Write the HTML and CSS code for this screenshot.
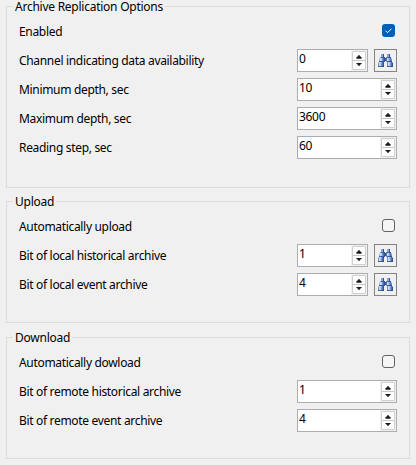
FILE: index.html
```
<!DOCTYPE html>
<html lang="en">
<head>
<meta charset="utf-8">
<title>Archive Replication Options</title>
<link rel="stylesheet" href="styles.css">
</head>
<body>
<svg class="defs" width="0" height="0">
  <defs>
    <linearGradient id="tube" x1="0" x2="1" y1="0" y2="0">
      <stop offset="0" stop-color="#4a70b4"/>
      <stop offset=".3" stop-color="#e4edf9"/>
      <stop offset=".65" stop-color="#5f86c6"/>
      <stop offset="1" stop-color="#1f4492"/>
    </linearGradient>
    <symbol id="find" viewBox="0 0 15 15">
      <path d="M3 1h3v3H3zM9 1h3v3H9z" fill="#88a6d6"/>
      <path d="M5 1h1v3H5zM11 1h1v3h-1z" fill="#2b5097"/>
      <path d="M2 4h5v5H1z" fill="url(#tube)"/>
      <path d="M8 4h5l1 5H8z" fill="url(#tube)"/>
      <path d="M6.5 5h2v3h-2z" fill="#34558f"/>
      <path d="M1 9h5v5H0v-4z" fill="url(#tube)"/>
      <path d="M9 9h5l1 1v4H9z" fill="url(#tube)"/>
      <path d="M1 8.5h5M9 8.5h5M2.500 4.500h4M8.500 4.500h4M0 13.500h6M9 13.500h6" stroke="#244890" stroke-width=".8"/>
    </symbol>
    <symbol id="arrows" viewBox="0 0 14 18">
      <path d="M6 3h2v1h1v1h1v2H4V5h1V4h1z" fill="#1a1a1a"/>
      <path d="M4 12h6v1H9v1H8v1H6v-1H5v-1H4z" fill="#1a1a1a"/>
    </symbol>
  </defs>
</svg>
<main class="panel">
  <section class="group main-group">
    <h2><span>Archive Replication Options</span></h2>
    <div class="row"><label>Enabled</label><span class="check checked"><svg viewBox="0 0 13 13"><path d="M3.500 6.700l2 2 4-4"/></svg></span></div>
    <div class="row"><label>Channel indicating data availability</label><div class="spin short"><b>0</b><i><svg><use href="#arrows"/></svg></i></div><button><svg><use href="#find"/></svg></button></div>
    <div class="row"><label>Minimum depth, sec</label><div class="spin"><b>10</b><i><svg><use href="#arrows"/></svg></i></div></div>
    <div class="row"><label>Maximum depth, sec</label><div class="spin"><b>3600</b><i><svg><use href="#arrows"/></svg></i></div></div>
    <div class="row"><label>Reading step, sec</label><div class="spin"><b>60</b><i><svg><use href="#arrows"/></svg></i></div></div>
  </section>
  <section class="group">
    <h2><span>Upload</span></h2>
    <div class="row"><label>Automatically upload</label><span class="check"></span></div>
    <div class="row"><label>Bit of local historical archive</label><div class="spin short"><b>1</b><i><svg><use href="#arrows"/></svg></i></div><button><svg><use href="#find"/></svg></button></div>
    <div class="row"><label>Bit of local event archive</label><div class="spin short"><b>4</b><i><svg><use href="#arrows"/></svg></i></div><button><svg><use href="#find"/></svg></button></div>
  </section>
  <section class="group">
    <h2><span>Download</span></h2>
    <div class="row"><label>Automatically dowload</label><span class="check"></span></div>
    <div class="row"><label>Bit of remote historical archive</label><div class="spin"><b>1</b><i><svg><use href="#arrows"/></svg></i></div></div>
    <div class="row"><label>Bit of remote event archive</label><div class="spin"><b>4</b><i><svg><use href="#arrows"/></svg></i></div></div>
  </section>
</main>
</body>
</html>
```
FILE: styles.css
```
* { box-sizing: border-box; }
body {
  margin: 0;
  height: 465px;
  background: #f0f0f0;
  color: #000;
  font: 12px/16px "Noto Sans", "Open Sans", sans-serif;
  letter-spacing: -0.32px;
}
svg { display: block; }
.defs { position: absolute; }
.panel { padding: 6px 6px 0; }
.group {
  width: 404px;
  height: 122px;
  margin-bottom: 14px;
  padding: 0 12px;
  border: 1px solid #dcdcdc;
}
.group:last-child { margin-bottom: 0; }
.main-group { height: 182px; margin-bottom: 13px; }
h2 {
  height: 14px;
  margin: -7px 0 3px -6px;
  font: inherit;
  line-height: 14px;
  letter-spacing: -0.25px;
}
h2 span {
  display: inline-block;
  padding: 0 2px;
  background: #f0f0f0;
}
.row {
  display: flex;
  align-items: center;
  width: 378px;
  height: 29px;
}
label { flex: 1; white-space: nowrap; }
.check {
  width: 13px;
  height: 13px;
  margin: 0 2px 2px 0;
  border: 1px solid #626262;
  border-radius: 3px;
  background: #f5f5f5;
}
.checked { border: 0; background: #005fb8; }
.checked path { fill: none; stroke: #fff; stroke-width: 1; }
.spin {
  display: flex;
  width: 100px;
  height: 23px;
  border: 1px solid #abadb3;
  background: #fff;
}
.short { width: 71px; }
.spin b {
  flex: 1;
  padding-left: 1px;
  font-weight: 400;
  line-height: 17px;
}
.spin i {
  width: 16px;
  padding: 1px;
  background: #f0f0f0;
}
.spin i svg {
  width: 14px;
  height: 19px;
  border: 1px solid #d0d0d0;
  border-radius: 1px;
  background: linear-gradient(#fdfdfd 8px, #c8c8c8 8px, #c8c8c8 9px, #fdfdfd 9px);
}
button {
  width: 23px;
  height: 23px;
  margin-left: 6px;
  padding: 3px;
  border: 1px solid #838383;
  background: #f0f0f0;
}
button svg { width: 15px; height: 15px; }
```
